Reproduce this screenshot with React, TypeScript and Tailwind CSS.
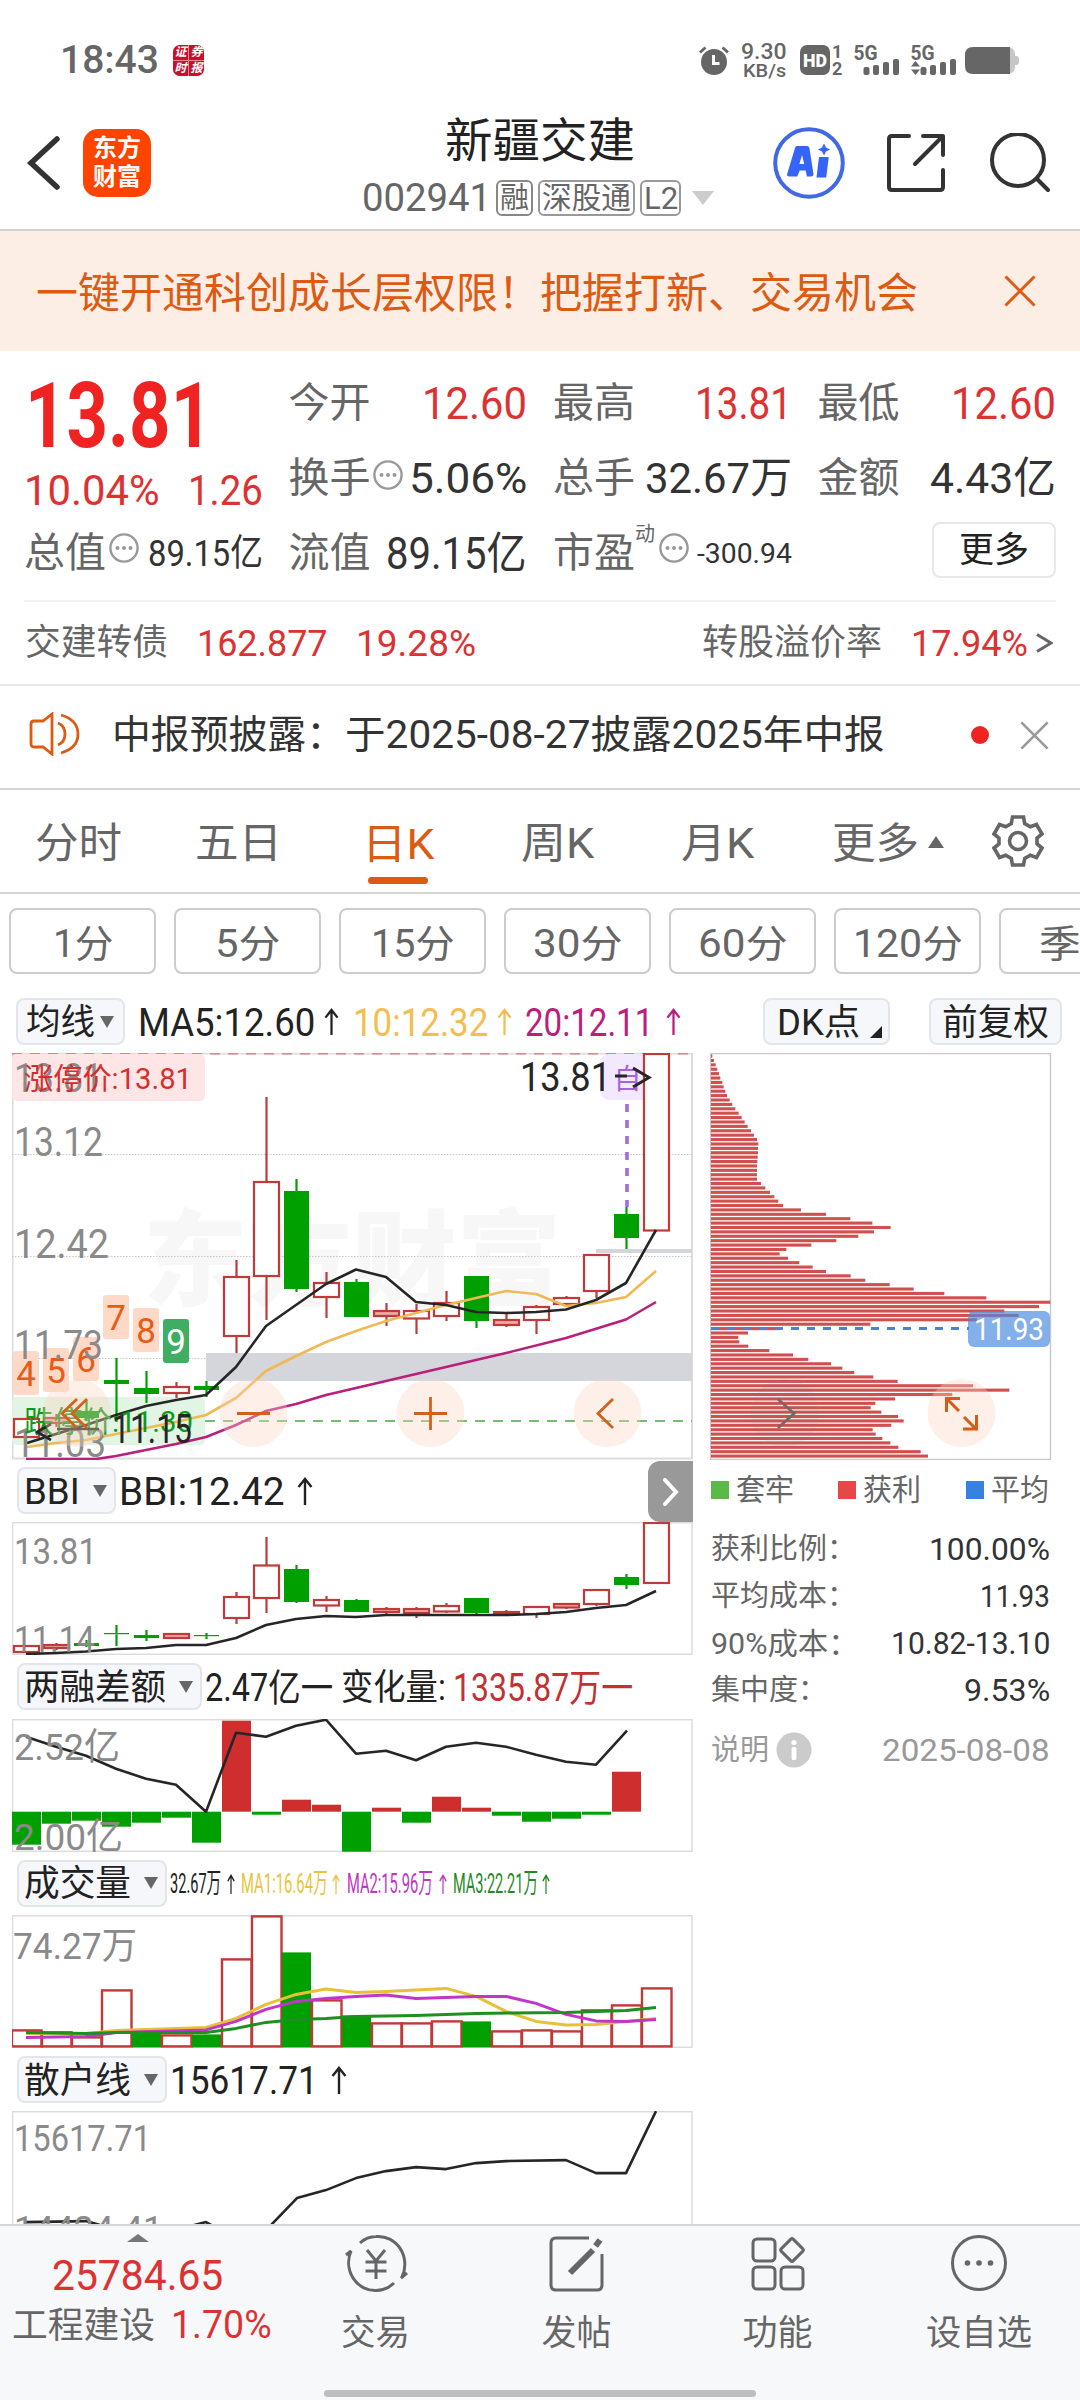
import { useLayoutEffect, useRef, useState } from "react";
import type { ReactNode } from "react";
import clsx from "clsx";

const RED = "#bf3a38";
const GREEN = "#00a000";
const INK = "#262626";

// text squeezed or stretched to the width of its box
function Fit({ className, children }: { className?: string; children: ReactNode }) {
  const box = useRef<HTMLSpanElement>(null);
  const inner = useRef<HTMLSpanElement>(null);
  const [scale, setScale] = useState(1);
  useLayoutEffect(() => {
    if (box.current && inner.current && inner.current.offsetWidth) {
      setScale(box.current.clientWidth / inner.current.offsetWidth);
    }
  }, [children]);
  return (
    <span ref={box} className={clsx("inline-block shrink-0 whitespace-nowrap leading-none", className)}>
      <span ref={inner} className="inline-block origin-left" style={{ transform: `scaleX(${scale})` }}>
        {children}
      </span>
    </span>
  );
}

function Label({ x, y, w, size = 37, fill = "#8a8a8a", children }: { x: number; y: number; w: number; size?: number; fill?: string; children: ReactNode }) {
  return (
    <text x={x} y={y} fontSize={size} fill={fill} textLength={w} lengthAdjust="spacingAndGlyphs">
      {children}
    </text>
  );
}

function Up({ className }: { className?: string }) {
  return (
    <svg viewBox="0 0 16 28" preserveAspectRatio="none" className={clsx("shrink-0", className)} fill="none" stroke="currentColor" strokeWidth="2.4">
      <path d="M8 28V2M1.5 10 8 2l6.500 8" />
    </svg>
  );
}

function Down({ className }: { className?: string }) {
  return (
    <svg viewBox="0 0 14 12" className={clsx("h-3 w-3.5 shrink-0", className)} fill="#666">
      <path d="M0 0h14L7 12z" />
    </svg>
  );
}

function Dots({ className }: { className?: string }) {
  return (
    <svg viewBox="0 0 30 30" className={clsx("size-[30px] shrink-0", className)} fill="#999">
      <circle cx="15" cy="15" r="13.600" fill="none" stroke="#999" strokeWidth="2.400" />
      <circle cx="8.500" cy="15" r="2" />
      <circle cx="15" cy="15" r="2" />
      <circle cx="21.500" cy="15" r="2" />
    </svg>
  );
}

function Signal({ arrows }: { arrows?: boolean }) {
  return (
    <svg viewBox="0 0 45 30" className="h-[30px] w-[45px] shrink-0 overflow-visible" fill="#666">
      <text x="-0.500" y="15" fontSize="20" fontWeight="700" textLength="24" lengthAdjust="spacingAndGlyphs">5G</text>
      <rect x="9.500" y="22" width="6" height="8" rx="2" />
      <rect x="19" y="20" width="6" height="10" rx="2" />
      <rect x="29" y="17" width="6" height="13" rx="2" />
      <rect x="39" y="14" width="6" height="16" rx="2" />
      {arrows && <path d="M0 21.500 4.500 16 9 21.500zM0 24.500h9L4.500 30z" />}
    </svg>
  );
}

function StatusBar() {
  return (
    <div className="flex h-[104px] shrink-0 items-center pt-4 text-[#666]">
      <Fit className="ml-[60px] w-[99px] text-[39px] font-medium">18:43</Fit>
      <div className="ml-3.5 grid size-[31px] grid-cols-2 gap-px overflow-hidden rounded-[7px] bg-[#e88a94] text-[12px] leading-[15px] text-white">
        {["证", "券", "时", "报"].map((c) => (
          <span key={c} className="bg-[#c8102e] text-center font-bold italic">{c}</span>
        ))}
      </div>
      <svg viewBox="0 0 30 30" className="ml-[495px] size-[30px] shrink-0">
        <circle cx="15" cy="17" r="13" fill="#666" />
        <path d="M1 7.500 6.500 2.500M29 7.500 23.500 2.500" stroke="#666" strokeWidth="2.800" />
        <path d="M14.500 10v8.500h6" stroke="#fff" strokeWidth="3" fill="none" />
      </svg>
      <div className="ml-3 flex w-[46px] flex-col">
        <Fit className="h-[19px] w-[46px] text-[22px] font-medium">9.30</Fit>
        <Fit className="mt-px ml-0.5 w-[43px] text-[19px] font-medium">KB/s</Fit>
      </div>
      <svg viewBox="0 0 43 30" className="ml-[13px] h-[30px] w-[43px] shrink-0 overflow-visible">
        <rect width="30" height="30" rx="7" fill="#666" />
        <text x="3" y="22" fontSize="19" fontWeight="900" fill="#fff" textLength="24" lengthAdjust="spacingAndGlyphs">HD</text>
        <text x="32" y="13" fontSize="18" fontWeight="700" fill="#666">1</text>
        <text x="32" y="30" fontSize="18" fontWeight="700" fill="#666">2</text>
      </svg>
      <div className="ml-[11px] flex gap-3">
        <Signal />
        <Signal arrows />
      </div>
      <svg viewBox="0 0 54 27" className="ml-[9px] h-[27px] w-[54px] shrink-0">
        <path d="M30 0h12q8 0 8 8v11q0 8-8 8H30zM50 9h1q3 0 3 3v3q0 3-3 3h-1z" fill="#c6c6c6" />
        <path d="M8 0h37v27H8q-8 0-8-8V8q0-8 8-8z" fill="#666" />
      </svg>
    </div>
  );
}

function Header() {
  return (
    <div className="flex h-[127px] shrink-0 border-b-2 border-[#d2d2d2]">
      <div className="flex h-[118px] w-[361px] items-center">
        <svg viewBox="0 0 34 56" className="ml-[26px] h-14 w-[34px]" fill="none" stroke="#333" strokeWidth="5.500" strokeLinecap="round">
          <path d="M31 4 5 28l26 24" />
        </svg>
        <div className="ml-[23px] flex size-[68px] flex-col items-center justify-center rounded-[15px] bg-[#ff4400] text-[24px] font-bold leading-[29px] text-white">
          <span>东方</span>
          <span>财富</span>
        </div>
      </div>
      <div className="flex w-[358px] flex-col pt-[13px]">
        <Fit className="ml-[84px] h-12 w-[190px] text-[47px] text-[#222]">新疆交建</Fit>
        <div className="mt-[13px] flex h-10 items-center text-[#666]">
          <Fit className="ml-px w-[129px] text-[38px]">002941</Fit>
          <div className="ml-[5px] flex gap-[5px]">
            <span className="flex h-9 w-[37px] items-center justify-center rounded-[6px] border-2 border-[#888]"><Fit className="w-[29px] text-[29px]">融</Fit></span>
            <span className="flex h-9 w-[97px] items-center justify-center rounded-[6px] border-2 border-[#999]"><Fit className="w-[89px] text-[30px]">深股通</Fit></span>
            <span className="flex h-9 w-[41px] items-center justify-center rounded-[6px] border-2 border-[#999]"><Fit className="w-[34px] text-[32px]">L2</Fit></span>
          </div>
          <svg viewBox="0 0 22 14" className="ml-[11px] h-3.5 w-[22px]" fill="#ccc">
            <path d="M0 0h22L11 14z" />
          </svg>
        </div>
      </div>
      <div className="flex h-[118px] items-center">
        <svg viewBox="0 0 72 72" className="ml-[54px] size-[72px]" fill="#3564f6">
          <circle cx="36" cy="36" r="33.800" fill="#fff" stroke="#4169e1" strokeWidth="4" />
          <path d="M24 19h10q2 0 2.400 2l4 25.500q.4 3-2.500 3h-4l-1.200-6h-6l-2.400 6h-8q-3 0-2-3L22 21q.5-2 2-2zM29 28l-2.600 9h4.800z" fillRule="evenodd" />
          <path d="M46 30h9q.8 0 .7 1l-2.500 19.500H43.500zM51 16.500l2 4 4 2-4 2-2 4-2-4-4-2 4-2z" />
        </svg>
        <svg viewBox="0 0 60 60" className="ml-[41px] size-[60px]" fill="none" stroke="#333" strokeWidth="4" strokeLinecap="round" strokeLinejoin="round">
          <path d="M23 3H6Q3 3 3 6v48q0 3 3 3h48q3 0 3-3V37M37 3h20v19M56 4 29 31" />
        </svg>
        <svg viewBox="0 0 60 60" className="ml-[44px] size-[60px]" fill="none" stroke="#333" strokeWidth="4" strokeLinecap="round">
          <circle cx="28" cy="27" r="26" />
          <path d="m47 46 11 11" />
        </svg>
      </div>
    </div>
  );
}

function Cross({ className }: { className?: string }) {
  return (
    <svg viewBox="0 0 32 32" className={clsx("shrink-0", className)} fill="none" stroke="currentColor" strokeWidth="3">
      <path d="m1.500 1.500 29 29M30.500 1.500l-29 29" />
    </svg>
  );
}

function Banner() {
  return (
    <div className="flex h-[120px] shrink-0 items-center bg-[#fceee5] text-[#dd5a13]">
      <Fit className="mt-[5px] ml-9 w-[882px] text-[42px]">一键开通科创成长层权限！把握打新、交易机会</Fit>
      <Cross className="ml-[86px] size-8" />
    </div>
  );
}

function Key({ children }: { children: ReactNode }) {
  return <Fit className="w-[82px] text-[41px] text-[#666]">{children}</Fit>;
}

function Quote() {
  return (
    <div className="grid h-[249px] shrink-0 grid-cols-4 grid-rows-[75px_75px_75px] gap-x-[26px] px-6 pt-[15px] text-[#333]">
      <div className="row-span-2 flex flex-col">
        <div className="flex h-[98px] items-center pt-0.5">
          <Fit className="ml-px w-[187px] text-[91px] font-bold text-[#f02323]">13.81</Fit>
        </div>
        <div className="flex h-[52px] items-center justify-between text-[43px] text-[#dc3232]">
          <Fit className="w-[136px]">10.04%</Fit>
          <Fit className="w-[75px]">1.26</Fit>
        </div>
      </div>
      <div className="flex items-center justify-between"><Key>今开</Key><Fit className="w-[105px] text-[45px] text-[#dc3232]">12.60</Fit></div>
      <div className="flex items-center justify-between"><Key>最高</Key><Fit className="w-[97px] text-[45px] text-[#dc3232]">13.81</Fit></div>
      <div className="flex items-center justify-between"><Key>最低</Key><Fit className="w-[105px] text-[45px] text-[#dc3232]">12.60</Fit></div>
      <div className="flex items-center"><Key>换手</Key><Dots className="mb-2 ml-0.5" /><Fit className="ml-auto w-[118px] text-[43px]">5.06%</Fit></div>
      <div className="flex items-center justify-between"><Key>总手</Key><Fit className="w-[147px] text-[43px]">32.67万</Fit></div>
      <div className="flex items-center justify-between"><Key>金额</Key><Fit className="w-[126px] text-[43px]">4.43亿</Fit></div>
      <div className="flex items-center"><Key>总值</Key><Dots className="ml-[3px] mb-3" /><Fit className="ml-auto w-[115px] text-[37px]">89.15亿</Fit></div>
      <div className="flex items-center justify-between"><Key>流值</Key><Fit className="w-[141px] text-[44px]">89.15亿</Fit></div>
      <div className="flex items-center">
        <Key>市盈</Key>
        <span className="mb-10 text-[20px] leading-none text-[#666]">动</span>
        <Dots className="mb-3 ml-1" />
        <Fit className="ml-auto w-[95px] text-[28px]">-300.94</Fit>
      </div>
      <div className="flex items-center justify-end">
        <div className="mb-2 flex h-14 w-[124px] items-center justify-center rounded-lg border-2 border-[#e6e8ec] text-[#222]">
          <Fit className="mt-0.5 w-[70px] text-[35px]">更多</Fit>
        </div>
      </div>
    </div>
  );
}

function Bond() {
  return (
    <div className="shrink-0 border-b-2 border-[#e8e8e8] px-6">
      <div className="flex h-[84px] items-center border-t-2 border-[#f3f3f3] text-[37px] text-[#dc3232]">
        <Fit className="ml-px w-[143px] text-[36px] text-[#666]">交建转债</Fit>
        <Fit className="ml-[29px] w-[131px]">162.877</Fit>
        <Fit className="ml-7 w-[120px]">19.28%</Fit>
        <Fit className="ml-auto w-[180px] text-[36px] text-[#666]">转股溢价率</Fit>
        <Fit className="ml-[29px] w-[117px]">17.94%</Fit>
        <svg viewBox="0 0 17 20" className="ml-2 mr-[3px] h-5 w-[17px]" fill="none" stroke="#666" strokeWidth="3"><path d="m1 1.500 14 8.500L1 18.500" /></svg>
      </div>
    </div>
  );
}

function News() {
  return (
    <div className="flex h-[104px] shrink-0 items-center border-b-2 border-[#d4d4d4] pb-1 text-[#333]">
      <svg viewBox="0 0 52 44" className="mb-0.5 ml-[29px] h-11 w-[52px]" fill="none" stroke="#dd5a13" strokeWidth="2.800">
        <path d="M23 2v40l-9-7H5q-3 0-3-3V12q0-3 3-3h9zM29 11q7 3 7 11t-7 11M32 3q17 5 17 19T32 41" />
      </svg>
      <div className="ml-[31px] flex text-[39px]">
        <Fit className="w-[233px]">中报预披露：</Fit>
        <Fit className="w-[540px]">于2025-08-27披露2025年中报</Fit>
      </div>
      <span className="ml-[86px] size-[18px] rounded-full bg-[#f02323]" />
      <Cross className="ml-[31px] size-[29px] text-[#999]" />
    </div>
  );
}

function Tabs() {
  return (
    <div className="flex h-[104px] shrink-0 items-center border-b-2 border-[#d4d4d4] text-[42px] text-[#666]">
      <Fit className="mt-1.5 ml-[35px] w-[87px]">分时</Fit>
      <Fit className="mt-1.5 ml-[73px] w-[87px]">五日</Fit>
      <div className="ml-20 flex h-full w-[72px] flex-col justify-between pt-[34px] pb-2 text-[#dd5a13]">
        <Fit className="w-[72px]">日K</Fit>
        <span className="ml-[6px] h-[7px] w-[60px] rounded-full bg-[#dd5a13]" />
      </div>
      <Fit className="mt-1.5 ml-[87px] w-[73px]">周K</Fit>
      <Fit className="mt-1.5 ml-[87px] w-[73px]">月K</Fit>
      <Fit className="mt-1.5 ml-[78px] w-[87px]">更多</Fit>
      <svg viewBox="0 0 16 12" className="mt-0.5 ml-[9px] h-3 w-4" fill="#666"><path d="M0 12h16L8 0z" /></svg>
      <svg viewBox="0 0 52 52" className="ml-[48px] size-[52px]" fill="none" stroke="#666" strokeWidth="3.600" strokeLinejoin="miter">
        <path d="M20.500 2h11l1.200 6.500 5.600 3.200 6.200-2.200 5.500 9.500-5 4.200v5.600l5 4.200-5.500 9.500-6.200-2.200-5.600 3.200L31.500 50h-11l-1.200-6.500-5.600-3.200-6.200 2.200L2 33l5-4.200v-5.600L2 19l5.500-9.500 6.200 2.200 5.600-3.200z" />
        <circle cx="26" cy="26" r="8.500" />
      </svg>
    </div>
  );
}

function Periods() {
  const cell = "flex h-[66px] w-[147px] shrink-0 items-center justify-center rounded-lg border-2 border-[#ccc] pt-[5px]";
  return (
    <div className="flex shrink-0 gap-[18px] overflow-hidden pt-3.5 pl-[9px] text-[38px] text-[#666]">
      <div className={cell}><Fit className="w-[60px]">1分</Fit></div>
      <div className={cell}><Fit className="w-[65px]">5分</Fit></div>
      <div className={cell}><Fit className="w-[84px]">15分</Fit></div>
      <div className={cell}><Fit className="w-[90px]">30分</Fit></div>
      <div className={cell}><Fit className="w-[90px]">60分</Fit></div>
      <div className={cell}><Fit className="w-[110px]">120分</Fit></div>
      <div className="flex h-[66px] w-[147px] shrink-0 items-center rounded-lg border-2 border-[#ccc] pt-[5px] pl-[38px]"><Fit className="w-[68px]">季K</Fit></div>
    </div>
  );
}

const chip = "flex h-[47px] shrink-0 items-center rounded-lg border-2 border-[#e2e5ea] bg-[#f6f7fa] text-[#222]";

function Averages() {
  return (
    <div className="flex h-[79px] shrink-0 items-center pt-4 pl-4 text-[38px]">
      <div className={clsx(chip, "w-[109px] pl-2")}>
        <Fit className="mt-0.5 w-[69px] text-[35px]">均线</Fit>
        <Down className="ml-[5px]" />
      </div>
      <Fit className="mt-0.5 ml-[13px] w-[177px] text-[#222]">MA5:12.60</Fit>
      <Up className="ml-[9px] h-[27px] w-[15px] text-[#222]" />
      <div className="flex items-center text-[#f4bd52]">
        <Fit className="mt-0.5 ml-[14px] w-[135px]">10:12.32</Fit>
        <Up className="ml-[9px] h-[27px] w-[15px]" />
      </div>
      <div className="flex items-center text-[#bb1e7d]">
        <Fit className="mt-0.5 ml-[13px] w-[128px]">20:12.11</Fit>
        <Up className="ml-[13px] h-[27px] w-[15px]" />
      </div>
      <div className={clsx(chip, "ml-[82px] w-[127px] pl-3")}>
        <Fit className="mt-0.5 w-[83px] text-[36px]">DK点</Fit>
        <svg viewBox="0 0 12 12" className="ml-2.5 mt-5 size-3" fill="#222"><path d="M12 0v12H0z" /></svg>
      </div>
      <div className={clsx(chip, "ml-[39px] w-[133px] justify-center")}>
        <Fit className="mt-0.5 w-[107px] text-[36px]">前复权</Fit>
      </div>
    </div>
  );
}

type Candle = [up: number, top: number, bottom: number, high: number, low: number];

const cx = (i: number) => 26.5 + i * 30;

function Candles({ data, half = 12.5 }: { data: Candle[]; half?: number }) {
  return (
    <g>
      {data.map(([up, top, bottom, high, low], i) => {
        const color = up ? RED : GREEN;
        return (
          <g key={i} stroke={color} strokeWidth="2.200">
            <path d={`M${cx(i)} ${high}V${top}M${cx(i)} ${bottom}V${low}`} />
            {up ? (
              <rect x={cx(i) - half} y={top} width={half * 2} height={bottom - top} fill={bottom - top > 5 ? "#fff" : "#f0a8a6"} />
            ) : (
              <rect x={cx(i) - half} y={top} width={half * 2} height={bottom - top} stroke="none" fill={color} />
            )}
          </g>
        );
      })}
    </g>
  );
}

function Line({ points, color = INK, width = 2.6 }: { points: string; color?: string; width?: number }) {
  return <polyline points={points} fill="none" stroke={color} strokeWidth={width} strokeLinejoin="round" />;
}

const DAY: Candle[] = [
  [1, 1419, 1437, 1419, 1437], [1, 1418, 1423, 1414, 1427], [0, 1411, 1418, 1400, 1421],
  [0, 1380, 1384, 1358, 1422], [0, 1388, 1394, 1371, 1403], [1, 1387, 1393, 1382, 1398],
  [0, 1386, 1390, 1381, 1397], [1, 1277, 1336, 1260, 1353], [1, 1182, 1276, 1097, 1320],
  [0, 1191, 1289, 1179, 1292], [1, 1283, 1297, 1272, 1318], [0, 1282, 1317, 1279, 1317],
  [1, 1311, 1316, 1303, 1326], [1, 1311, 1318.5, 1304, 1334], [1, 1303, 1316, 1291, 1321],
  [0, 1276, 1321, 1276, 1328], [1, 1320, 1325, 1314, 1327], [1, 1307, 1320, 1305, 1334],
  [1, 1298, 1304, 1296, 1304], [1, 1255, 1291, 1254, 1298], [0, 1214, 1238, 1207, 1249],
  [1, 1054, 1230.5, 1054, 1230],
];

const TAGS: [string, number, number][] = [["4", 13, 1351], ["5", 43, 1348], ["6", 73, 1337], ["7", 103, 1295], ["8", 133, 1308], ["9", 163, 1319]];

function DayChart() {
  return (
    <svg viewBox="12 1053 681 407" className="block h-[407px] w-[681px]">
      <rect x="12.500" y="1053.500" width="679.500" height="405" fill="none" stroke="#dcdcdc" strokeWidth="2" />
      <text x="143" y="1298" fontSize="104" fontWeight="900" fill="#f7f7f7" textLength="418" lengthAdjust="spacingAndGlyphs">东方财富</text>
      <path d="M12 1154.500h680M12 1256.500h680M12 1358.500h680" stroke="#c9c9c9" strokeDasharray="1.500 1.500" />
      <rect x="206" y="1353" width="486" height="28" fill="#d4d6db" />
      <rect x="596" y="1249" width="96" height="4" fill="#d4d6db" />
      <path d="M12 1053.800h680" stroke="#d08a80" strokeWidth="1.500" strokeDasharray="10 8" />
      {TAGS.map(([n, x, y]) => (
        <g key={n}>
          <rect x={x} y={y} width="26" height="44" rx="3" fill={n === "9" ? "#3fae62" : "#ffd9c8"} />
          <text x={x + 13} y={y + 35} fontSize="35" textAnchor="middle" fill={n === "9" ? "#fff" : "#ea5a14"}>{n}</text>
        </g>
      ))}
      <rect x="12" y="1054" width="193" height="47" rx="5" fill="#ffe6e6" />
      <rect x="12" y="1397" width="193" height="48" rx="5" fill="#e2f4e3" />
      <path d="M205 1421h487" stroke="#74bd74" strokeWidth="1.800" strokeDasharray="10 8" />
      <rect x="600" y="1054" width="54" height="46" rx="9" fill="#f3e9ff" />
      <Candles data={DAY} />
      <Line points="26,1459 96,1459 116,1456 146,1450 176,1444 206,1437 236,1425 266,1411 296,1404 326,1395 356,1388 386,1381 446,1367 506,1353 566,1338 626,1319.500 656,1302" color="#bb1e7d" />
      <Line points="27,1447 56,1443 86,1440 116,1434 146,1428 176,1422 206,1415 236,1398 266,1371 296,1356 326,1342 356,1331 386,1321 416,1313 446,1305 476,1298 506,1291 536,1294 566,1306 596,1303 626,1297 656,1271" color="#f0b955" />
      <Line points="27,1443 56,1434 86,1425 116,1415 146,1406 176,1400 206,1395 236,1367 266,1326 296,1305 326,1284 356,1269.500 386,1277 416,1302 446,1305 476,1312 506,1313 536,1312 566,1309.500 596,1300 626,1283 656,1230" />
      <Label x={14} y={1092} w={89} size={40}>13.81</Label>
      <Label x={14} y={1156} w={89} size={40}>13.12</Label>
      <Label x={14} y={1257.5} w={95} size={40}>12.42</Label>
      <Label x={14} y={1359} w={89} size={40}>11.73</Label>
      <Label x={14} y={1457} w={92} size={40}>11.03</Label>
      <Label x={24} y={1089} w={168} size={30} fill="#d92c2c">涨停价:13.81</Label>
      <Label x={24} y={1432} w={169} size={30} fill="#0f9a1c">跌停价:11.30</Label>
      <Label x={112} y={1443} w={80} size={40} fill={INK}>11.15</Label>
      <path d="M51 1424 37 1432l14 8M57 1429h42" fill="none" stroke={INK} strokeWidth="2.600" />
      <Label x={520} y={1091} w={91} size={40} fill={INK}>13.81</Label>
      <text x="613.500" y="1089" fontSize="28" fill="#a663e0">自</text>
      <path d="M627 1104v103" stroke="#a56be0" strokeWidth="3.600" strokeDasharray="8 8" />
      <path d="M615 1076h12M633 1068l16 9.500-16 9.500" fill="none" stroke={INK} strokeWidth="3" />
      <g fill="#fbd3bf" fillOpacity=".36">
        <circle cx="77" cy="1413" r="34" />
        <circle cx="253.500" cy="1413" r="34" />
        <circle cx="430.500" cy="1413" r="34" />
        <circle cx="607.500" cy="1413" r="34" />
      </g>
      <path d="M77 1399l-15 14.500 15 14.500M87 1399l-15 14.500 15 14.500M237 1413.500h33M414 1413.500h33M430.500 1397v33M613 1399l-15 14.500 15 14.500" fill="none" stroke="#d4601d" strokeWidth="2.800" />
    </svg>
  );
}

const CHIPS = [
  66, 71, 76, 81, 86, 90, 96, 100, 105, 110, 118, 126, 135, 145, 154, 163, 172, 182, 191, 200, 204, 203, 203, 202, 201, 200, 200, 200, 200,
  212, 225, 239, 252, 264, 278, 332, 407, 480, 546, 601, 551, 504, 438, 363, 288, 268, 293, 327, 367, 407, 481, 525, 598, 670, 762, 888,
  1080, 1046, 942, 985, 860, 540, 265, 173, 144, 147, 174, 237, 308, 354, 422, 456, 492, 549, 622, 848, 957, 786, 614, 555, 541, 573, 623,
  640, 603, 547, 556, 576, 600, 624, 691, 713,
];

function ChipChart() {
  return (
    <svg viewBox="710 1053 342 407" className="block h-[407px] w-[342px]">
      <rect x="710.500" y="1053.500" width="340" height="406" fill="none" stroke="#c9c9c9" strokeWidth="1.500" />
      {CHIPS.map((v, i) => (
        <rect key={i} x="711" y={1054.5 + i * 4.396} width={(v - 62) / 3} height="3.100" fill="#d05050" />
      ))}
      <path d="M711 1328.500h258" stroke="#4b83cf" strokeWidth="3" strokeDasharray="8 8" />
      <rect x="968" y="1311" width="82" height="36" rx="6" fill="#4a8be0" fillOpacity=".68" />
      <Label x={974} y={1340} w={70} size={32} fill="#fff">11.93</Label>
      <circle cx="785" cy="1413" r="34" fill="#777" fillOpacity=".07" />
      <path d="M778 1399l16 14.500-16 14.500" fill="none" stroke="#7b6666" strokeWidth="2.800" />
      <circle cx="961.500" cy="1413" r="34" fill="#fbd3bf" fillOpacity=".36" />
      <path d="M946.500 1412v-13.500H960M947 1399l12 12M964 1417l12 12M963 1429h13.500v-14" fill="none" stroke="#d85a14" strokeWidth="3" />
    </svg>
  );
}

const BBI: Candle[] = [
  [1, 1646, 1652, 1646, 1652], [1, 1645, 1648, 1643, 1650], [0, 1643, 1646, 1640, 1647],
  [0, 1633, 1634.2, 1625, 1646], [0, 1635, 1638, 1630, 1641], [1, 1634, 1638, 1633, 1639],
  [0, 1635, 1636.2, 1633, 1639], [1, 1597, 1618, 1592, 1624], [1, 1565.5, 1598, 1537, 1613],
  [0, 1569, 1602, 1565, 1603], [1, 1600, 1605.5, 1596, 1612], [0, 1600, 1612, 1599, 1612],
  [1, 1609, 1612, 1607, 1615], [1, 1609, 1613, 1607, 1618], [1, 1606, 1611.5, 1603, 1613],
  [0, 1598, 1613, 1598, 1616], [1, 1612, 1614, 1610, 1615], [1, 1607, 1614, 1607, 1618],
  [1, 1604, 1607.5, 1603, 1609], [1, 1590, 1604, 1590, 1606], [0, 1577, 1585, 1574, 1589],
  [1, 1523, 1583, 1523, 1583],
];

// level reached by each bar, the base line is at 1811
const MARGIN = [1844, 1823, 1820, 1826, 1822, 1817, 1842, 1720, 1814, 1799, 1804, 1851, 1807, 1822, 1796, 1807, 1815, 1821, 1818, 1814, 1771];
const VOLUME: [up: number, top: number][] = [
  [1, 2030], [1, 2032], [1, 2037], [1, 1990], [0, 2032], [1, 2035], [0, 2034], [1, 1959], [1, 1916], [0, 1952], [1, 2000],
  [0, 2015], [1, 2023], [1, 2023], [1, 2021], [0, 2021], [1, 2031], [1, 2030], [1, 2031], [1, 2010], [1, 2005], [1, 1988],
];

function Frame({ y, children }: { y: number; children: ReactNode }) {
  return (
    <svg viewBox={`12 ${y} 681 133`} className="block h-[133px] w-[681px] shrink-0">
      <rect x="12.500" y={y + 0.7} width="679.500" height="131.600" fill="none" stroke="#dcdcdc" strokeWidth="1.500" />
      {children}
    </svg>
  );
}

function Head({ name, width, children }: { name: string; width: string; children: ReactNode }) {
  return (
    <div className="flex h-[63.300px] shrink-0 items-center pl-[5px] text-[38px] text-[#222]">
      <div className={clsx(chip, "justify-between pl-[5px] pr-[7px]")}>
        <Fit className={clsx(width, "mt-0.5 text-[36px]")}>{name}</Fit>
        <Down className="ml-[13px]" />
      </div>
      {children}
    </div>
  );
}

function LeftColumn() {
  return (
    <div className="flex w-[681px] shrink-0 flex-col">
      <DayChart />
      <div className="-mt-px flex flex-col">
        <Head name="BBI" width="w-[56px]">
          <Fit className="mt-[3px] ml-[3px] w-[166px] text-[39px]">BBI:12.42</Fit>
          <Up className="ml-3 h-7 w-4" />
          <div className="ml-auto flex h-[61px] w-[45px] items-center justify-center self-end rounded-l-[12px] bg-[#999]">
            <svg viewBox="0 0 16 28" className="h-7 w-4" fill="none" stroke="#fff" strokeWidth="4" strokeLinecap="round"><path d="m2 2 11 12L2 26" /></svg>
          </div>
        </Head>
        <Frame y={1522}>
          <Candles data={BBI} />
          <Line points="26,1654 56,1653 86,1651.500 116,1649 146,1648 176,1645 206,1645 236,1638 266,1625 296,1619 326,1616 356,1617 386,1615 506,1615 536,1614 566,1612 596,1608 626,1605 656,1591" />
          <Label x={14} y={1563.5} w={83}>13.81</Label>
          <Label x={14} y={1652} w={81}>11.14</Label>
        </Frame>
        <Head name="两融差额" width="w-[142px]">
          <Fit className="mt-0.5 ml-[3px] w-[128px]">2.47亿一</Fit>
          <Fit className="mt-0.5 ml-2 w-[105px] text-[36px]">变化量:</Fit>
          <Fit className="mt-0.5 ml-[7px] w-[180px] text-[#c23232]">1335.87万一</Fit>
        </Head>
        <Frame y={1718.3}>
          {MARGIN.map((v, i) => (
            <rect key={i} x={cx(i) - 14.5} y={Math.min(v, 1811)} width="29" height={Math.abs(v - 1811)} fill={v < 1811 ? "#cf2e2e" : GREEN} />
          ))}
          <Line points="26,1736 56,1746 86,1755 116,1768 146,1778 176,1784 206,1811 236,1732 266,1736 296,1725 326,1719 356,1753 386,1750 416,1759.500 446,1746 476,1742 506,1746 536,1754 566,1761 596,1764 627,1730" />
          <Label x={14} y={1759} w={106}>2.52亿</Label>
          <Label x={14} y={1849.5} w={109}>2.00亿</Label>
        </Frame>
        <Head name="成交量" width="w-[107px]">
          <div className="flex items-center pt-0.5 text-[28px]">
            <Fit className="ml-[3px] w-[51px]">32.67万</Fit>
            <Up className="ml-1.5 h-5 w-2" />
            <div className="flex items-center text-[#eac33e]"><Fit className="ml-1.5 w-[87px]">MA1:16.64万</Fit><Up className="ml-1 h-5 w-2" /></div>
            <div className="flex items-center text-[#bf35c4]"><Fit className="ml-[7px] w-[86px]">MA2:15.96万</Fit><Up className="ml-1.5 h-5 w-2" /></div>
            <div className="flex items-center text-[#1f8a1f]"><Fit className="ml-1.5 w-[85px]">MA3:22.21万</Fit><Up className="ml-1 h-5 w-2" /></div>
          </div>
        </Head>
        <Frame y={1914.6}>
          <Label x={13} y={1959} w={124}>74.27万</Label>
          {VOLUME.map(([up, top], i) =>
            up ? (
              <rect key={i} x={cx(i) - 14.5} y={top} width="29.500" height={2046 - top} fill="#fff" stroke={RED} strokeWidth="2.400" />
            ) : (
              <rect key={i} x={cx(i) - 14.5} y={top} width="29" height={2047 - top} fill={GREEN} />
            )
          )}
          <Line points="26,2033 86,2033 116,2030 146,2029 206,2027 236,2018 266,2004 296,1994 326,1988.500 356,1992 386,1991 446,1988 476,1996 506,2011 536,2021 566,2024.500 596,2024 626,2021 656,2018" color="#e8c035" width={3} />
          <Line points="26,2037 86,2036 116,2032 206,2029.500 236,2021 266,2009 296,2001 326,1998 356,1996 386,1994.500 416,1998 446,1997 476,1996 506,1996 536,2003 566,2014 596,2020.500 626,2021 656,2019" color="#c136c8" width={3} />
          <Line points="26,2032 86,2033 116,2032 206,2032 236,2028 266,2022 296,2019 326,2018 356,2016 416,2015 476,2013 566,2012 626,2010 656,2007" color="#1f8f1f" width={3} />
        </Frame>
        <Head name="散户线" width="w-[107px]">
          <Fit className="mt-[3px] ml-[3px] w-[148px] text-[39px]">15617.71</Fit>
          <Up className="ml-[13px] h-7 w-4" />
        </Head>
        <Frame y={2110.9}>
          <Line points="26,2222 86,2221 100,2225 190,2226 206,2222 215,2227 270,2226 297,2198 326,2190 356,2178 386,2171 416,2167 446,2169 476,2163 506,2161 566,2160 596,2173 626,2173 656,2111" />
          <Label x={14} y={2151} w={137}>15617.71</Label>
          <Label x={14} y={2242} w={149}>14424.41</Label>
        </Frame>
      </div>
    </div>
  );
}

function RightColumn() {
  return (
    <div className="flex w-[342px] shrink-0 flex-col text-[31px]">
      <ChipChart />
      <div className="flex h-[60px] items-center text-[30px] text-[#666]">
        <span className="ml-px size-[18px] bg-[#5cb947]" />
        <Fit className="ml-[7px] w-[58px]">套牢</Fit>
        <span className="ml-11 size-[18px] bg-[#e64848]" />
        <Fit className="ml-[7px] w-[58px]">获利</Fit>
        <span className="ml-[45px] size-[18px] bg-[#3582e2]" />
        <Fit className="ml-[7px] w-[58px]">平均</Fit>
      </div>
      <div className="flex flex-col pt-1.5 pl-px pr-0.5 text-[#333]">
        <div className="flex h-[47px] items-center justify-between"><Fit className="w-[145px] text-[29px] text-[#666]">获利比例：</Fit><Fit className="w-[121px]">100.00%</Fit></div>
        <div className="flex h-[47px] items-center justify-between"><Fit className="w-[145px] text-[29px] text-[#666]">平均成本：</Fit><Fit className="w-[70px]">11.93</Fit></div>
        <div className="flex h-[47px] items-center justify-between"><Fit className="w-[148px] text-[30px] text-[#666]">90%成本：</Fit><Fit className="w-[159px]">10.82-13.10</Fit></div>
        <div className="flex h-[47px] items-center justify-between"><Fit className="w-[116px] text-[29px] text-[#666]">集中度：</Fit><Fit className="w-[86px]">9.53%</Fit></div>
      </div>
      <div className="mt-3 flex h-[48px] items-center pl-px pr-0.5 text-[#999]">
        <Fit className="w-[58px] text-[29px]">说明</Fit>
        <svg viewBox="0 0 36 36" className="ml-[7px] size-9" fill="#fff">
          <circle cx="18" cy="18" r="17.500" fill="#cbcbcb" />
          <circle cx="18" cy="10.500" r="2.600" />
          <rect x="15.600" y="15" width="4.800" height="13" rx="1.500" />
        </svg>
        <Fit className="ml-auto w-[168px] text-[32px]">2025-08-08</Fit>
      </div>
    </div>
  );
}

function NavItem({ label, width, children }: { label: string; width: string; children: ReactNode }) {
  return (
    <div className="flex w-[201px] shrink-0 flex-col items-center pt-[7px]">
      <svg viewBox="0 0 66 60" className="h-[60px] w-[66px]" fill="none" stroke="#666" strokeWidth="3">
        {children}
      </svg>
      <Fit className={clsx(width, "mt-[23px] text-[35px] text-[#666]")}>{label}</Fit>
    </div>
  );
}

function BottomBar() {
  return (
    <div className="flex h-[176px] shrink-0 flex-col border-t-2 border-[#d3d6db] bg-[#f7f8fa]">
      <div className="flex flex-1">
        <div className="flex w-[275px] shrink-0 flex-col items-center pt-2 text-[#dc3232]">
          <svg viewBox="0 0 22 8" className="h-2 w-[22px]" fill="#777"><path d="M0 8h22L11 0z" /></svg>
          <Fit className="mt-[13px] w-[171px] text-[42px]">25784.65</Fit>
          <div className="mt-[9px] flex w-full items-center">
            <Fit className="ml-3 w-[143px] text-[36px] text-[#666]">工程建设</Fit>
            <Fit className="ml-4 w-[101px] text-[39px]">1.70%</Fit>
          </div>
        </div>
        <NavItem label="交易" width="w-[69px]">
          <path d="M17 10Q24 3.500 33 3.500A26.500 28 0 0 1 59 44l-1 1 6-5M51 50Q43 57.500 33 57.500A26.500 28 0 0 1 8 18l-5 4" />
          <path d="m24 17 9 11 9-11M33 28v18M22.500 29h21M22.500 38h21" />
        </NavItem>
        <NavItem label="发帖" width="w-[70px]">
          <path d="M45 5H12Q7 5 7 10v42q0 5 5 5h41q5 0 5-5V21" />
          <path d="m56 7-4.500 6M49 17 26 40" strokeWidth="6" />
        </NavItem>
        <NavItem label="功能" width="w-[70px]">
          <rect x="8" y="6" width="22" height="22" rx="4" />
          <rect x="8" y="34" width="22" height="22" rx="4" />
          <rect x="36" y="34" width="22" height="22" rx="4" />
          <rect x="38.500" y="8.500" width="17" height="17" rx="2" transform="rotate(45 47 17)" />
        </NavItem>
        <NavItem label="设自选" width="w-[106px]">
          <circle cx="33" cy="30" r="26.500" />
          <g fill="#666" stroke="none">
            <circle cx="21.500" cy="30" r="2.800" />
            <circle cx="33" cy="30" r="2.800" />
            <circle cx="44.500" cy="30" r="2.800" />
          </g>
        </NavItem>
      </div>
      <div className="mb-[3px] h-[7px] w-[432px] self-center rounded-full bg-[#bdbec0]" />
    </div>
  );
}

export default function App() {
  return (
    <div className="flex h-[2400px] w-[1080px] flex-col overflow-hidden bg-white font-['Roboto','Noto_Sans_CJK_SC',sans-serif]">
      <StatusBar />
      <Header />
      <Banner />
      <Quote />
      <Bond />
      <News />
      <Tabs />
      <Periods />
      <Averages />
      <div className="flex min-h-0 flex-1 items-start gap-[17px] overflow-hidden pl-3">
        <LeftColumn />
        <RightColumn />
      </div>
      <BottomBar />
    </div>
  );
}
